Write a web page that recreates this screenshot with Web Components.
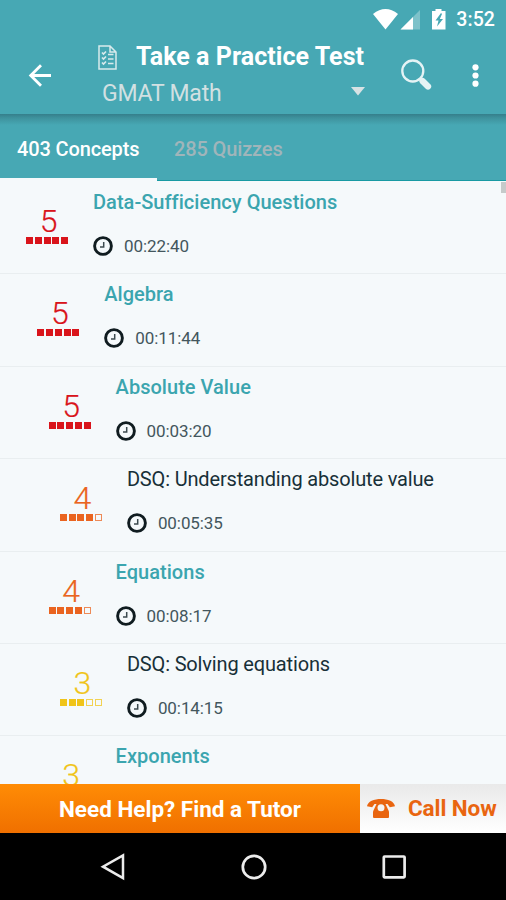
<!DOCTYPE html>
<html lang="en">
<head>
<meta charset="utf-8">
<title>Take a Practice Test</title>
<style>
html, body { margin: 0; height: 100%; overflow: hidden; }
body { font-family: Roboto, "Liberation Sans", sans-serif; background: #f5f9fb; }
</style>
</head>
<body>
<practice-app></practice-app>
<script>
const define = (name, html, setup) => {
  const tpl = document.createElement('template');
  tpl.innerHTML = html;
  customElements.define(name, class extends HTMLElement {
    constructor() {
      super();
      this.attachShadow({ mode: 'open' }).append(tpl.content.cloneNode(true));
    }
    connectedCallback() { if (setup) setup(this, this.shadowRoot); }
  });
};

define('status-bar', `
<style>
:host { display: flex; height: 38px; justify-content: flex-end; align-items: center; padding-right: 11px; box-sizing: border-box; color: #fff; }
svg { display: block; margin-right: 10px; margin-top: -1px; }
span { font: 500 19.5px/38px Roboto, sans-serif; letter-spacing: .1px; padding-top: 2px; }
</style>
<svg width="76" height="24" viewBox="0 0 76 24">
  <path d="M3 7Q15.500 -3 28 7L15.500 22.500Z" fill="#fff"/>
  <path d="M50 3V22.500H30.500Z" fill="#fff" opacity=".3"/>
  <path d="M43 10V22.500H30.500Z" fill="#fff"/>
  <path d="M62 4h3.500V2h6v2h4v18.500H62Z" fill="#fff"/>
  <path d="M71 6L65.500 13.500h3L67 19.500L73 12h-3.200L72 7Z" fill="#47a8b4"/>
</svg>
<span>3:52</span>`);

define('app-bar', `
<style>
:host { display: flex; height: 76px; color: #fff; }
.back { width: 93px; padding: 25px 0 0 28px; box-sizing: border-box; }
.mid { width: 275px; }
.row { display: flex; align-items: center; height: 38px; }
.row svg { margin-left: 5px; margin-right: 19px; margin-top: 1px; flex: none; }
h1 { margin: 0; font: 700 25px/38px Roboto, sans-serif; white-space: nowrap; letter-spacing: .05px; }
.sub { display: flex; justify-content: space-between; align-items: center; height: 34px; padding: 0 3px 0 9px; font-size: 23px; letter-spacing: -.2px; color: #d2e0e2; }
svg { display: block; }
.sub svg { margin-top: -3px; }
.search { padding: 21px 0 0 32px; }
.more { padding: 26px 0 0 38px; }
</style>
<div class="back"><svg width="24" height="25" viewBox="0 0 24 25" fill="none" stroke="#fff" stroke-width="2.800"><path d="M23 12.500H3M13 2.200L2.700 12.500L13 22.800"/></svg></div>
<div class="mid">
  <div class="row">
    <svg width="19" height="25" viewBox="0 0 19 25" fill="none" stroke="#d9eaec" stroke-width="1.500"><path d="M1 1H12L18 7V24H1ZM12 1V7H18"/><path d="M4 7.500l1.500 1.500L8 6.500M4 12.500l1.500 1.500L8 11.500M4 17.500l1.500 1.500L8 16.500M10 9.500h5.500M10 14h5.500M10 18.500h5.500" stroke-width="1.700"/></svg>
    <h1>Take a Practice Test</h1>
  </div>
  <div class="sub"><span>GMAT Math</span><svg width="14" height="9"><path d="M0 0H14L7 8.500Z" fill="#d8e2e4"/></svg></div>
</div>
<div class="search"><svg width="34" height="34" viewBox="0 0 34 34"><circle cx="12.800" cy="12" r="10.500" fill="none" stroke="#e5f3f5" stroke-width="2.300"/><path d="M20 19L27 26" stroke="#e5f3f5" stroke-width="2.500"/><path d="M22.500 22L28 27.500" stroke="#e5f3f5" stroke-width="6.300" stroke-linecap="round"/></svg></div>
<div class="more"><svg width="7" height="25" fill="#fff"><circle cx="3.500" cy="3.300" r="3.100"/><circle cx="3.500" cy="11.500" r="3.100"/><circle cx="3.500" cy="19.700" r="3.100"/></svg></div>`);

define('tab-bar', `
<style>
:host { display: flex; height: 67px; box-sizing: border-box; background: linear-gradient(#357f8b 0, #3e929d 4px, #47a8b4 11px); }
::slotted(*) { box-sizing: border-box; display: block; font: 500 20px/70px Roboto, sans-serif; letter-spacing: -.13px; height: 67px; }
::slotted(:first-child) { width: 157px; padding-left: 17px; color: #fff; border-bottom: 3px solid #f5f9fb; }
::slotted(:last-child) { flex: 1; padding-left: 17px; color: #a0b5ba; border-bottom: 1px solid #189aa3; }
</style><slot></slot>`);

define('score-meter', `
<style>
:host { display: block; width: 42px; color: var(--tone); text-align: center; }
b { display: block; font: 300 32px/32px Roboto, sans-serif; margin-left: 3px; -webkit-text-stroke: .2px; }
div { display: flex; gap: 1.750px; }
i { box-sizing: border-box; width: 7px; height: 7px; border: 1px solid; opacity: .75; }
i.on { background: currentColor; opacity: 1; }
</style><b></b><div></div>`, (el, root) => {
  const n = +el.getAttribute('value');
  el.style.setProperty('--tone', { 5: '#d9141b', 4: '#ea6420', 3: '#f0c419' }[n]);
  root.querySelector('b').textContent = n;
  root.querySelector('div').innerHTML = Array.from({ length: 5 }, (_, k) => `<i class="${k < n ? 'on' : ''}"></i>`).join('');
});

define('concept-row', `
<style>
:host { display: flex; box-sizing: border-box; height: 92.4px; flex: none; border-bottom: 1px solid #e9eef0; padding-left: calc(26px + var(--level) * 11.3px); }
score-meter { margin-top: 23px; margin-right: 25px; }
h2 { margin: 5px 0 0; font: 500 20px/30px Roboto, sans-serif; letter-spacing: .03px; color: #3ba5af; white-space: nowrap; }
:host([leaf]) h2 { font-weight: 400; color: #183038; letter-spacing: -.16px; }
p { display: flex; align-items: center; margin: 18px 0 0; height: 22px; font-size: 17px; letter-spacing: -.08px; color: #43565d; }
svg { margin-right: 11px; }
</style>
<div><h2><slot></slot></h2></div>`, (el, root) => {
  el.style.setProperty('--level', el.getAttribute('level'));
  const meter = document.createElement('score-meter');
  meter.setAttribute('value', el.getAttribute('score'));
  const body = root.querySelector('div');
  body.before(meter);
  if (el.hasAttribute('time')) {
    body.insertAdjacentHTML('beforeend', `<p><svg width="20" height="20" viewBox="0 0 20 20" fill="none"><circle cx="10" cy="10" r="8.400" stroke="#101c20" stroke-width="2.900"/><path d="M10.700 6V11H7" stroke="#3c4a4f" stroke-width="1.500"/></svg><span>${el.getAttribute('time')}</span></p>`);
  }
});

define('help-bar', `
<style>
:host { display: flex; height: 49px; flex: none; font: 700 22.5px/51px Roboto, sans-serif; white-space: nowrap; position: relative; }
.tutor { width: 360px; text-align: center; color: #fff; background: linear-gradient(#ff8c05, #f07000); }
.call { flex: 1; color: #e96510; background: linear-gradient(#e9e9e9, #fff); padding-left: 6px; display: flex; align-items: center; }
svg { margin-right: 12px; flex: none; margin-top: -1px; }
.call span { letter-spacing: -.1px; }
</style>
<div class="tutor">Need Help? Find a Tutor</div>
<div class="call"><svg width="30" height="21" viewBox="0 0 30 21" fill="#e96510"><path d="M1 8.300C2 -1.500 28 -1.500 29 8.300L23.800 9.200L21.500 6H8.500L6.200 9.200Z"/><path d="M11 5H19L23 13.500V19Q23 20 22 20H8Q7 20 7 19V13.500Z"/><circle cx="15" cy="9.800" r="3.500" fill="#f4f4f4"/></svg><span>Call Now</span></div>`);

define('nav-bar', `
<style>
:host { display: flex; justify-content: space-between; align-items: center; height: 67px; flex: none; background: #000; padding: 0 99px 0 99px; }
svg { display: block; }
</style>
<svg width="27" height="28" fill="none" stroke="#ececec" stroke-width="2.500"><path d="M24 2.500V25L4 13.700Z"/></svg>
<svg width="26" height="28" fill="none" stroke="#ececec" stroke-width="2.700"><circle cx="13" cy="14" r="11.200"/></svg>
<svg width="26" height="28" fill="none" stroke="#ececec" stroke-width="2.700"><rect x="2.800" y="3.500" width="20.800" height="20.800" rx=".8"/></svg>`);

define('practice-app', `
<style>
:host { display: flex; flex-direction: column; width: 506px; height: 900px; position: relative; }
header { background: #47a8b4; flex: none; }
main { flex: 1; min-height: 0; overflow: hidden; display: flex; flex-direction: column; padding-top: 1px; }
.thumb { position: absolute; right: 0; top: 182px; width: 5px; height: 11px; background: #c5caca; }
</style>
<header><status-bar></status-bar><app-bar></app-bar></header>
<tab-bar><span>403 Concepts</span><span>285 Quizzes</span></tab-bar>
<main>
<concept-row level="0" score="5" time="00:22:40">Data-Sufficiency Questions</concept-row>
<concept-row level="1" score="5" time="00:11:44">Algebra</concept-row>
<concept-row level="2" score="5" time="00:03:20">Absolute Value</concept-row>
<concept-row level="3" score="4" time="00:05:35" leaf>DSQ: Understanding absolute value</concept-row>
<concept-row level="2" score="4" time="00:08:17">Equations</concept-row>
<concept-row level="3" score="3" time="00:14:15" leaf>DSQ: Solving equations</concept-row>
<concept-row level="2" score="3">Exponents</concept-row>
</main>
<div class="thumb"></div>
<help-bar></help-bar>
<nav-bar></nav-bar>`);
</script>
</body>
</html>
